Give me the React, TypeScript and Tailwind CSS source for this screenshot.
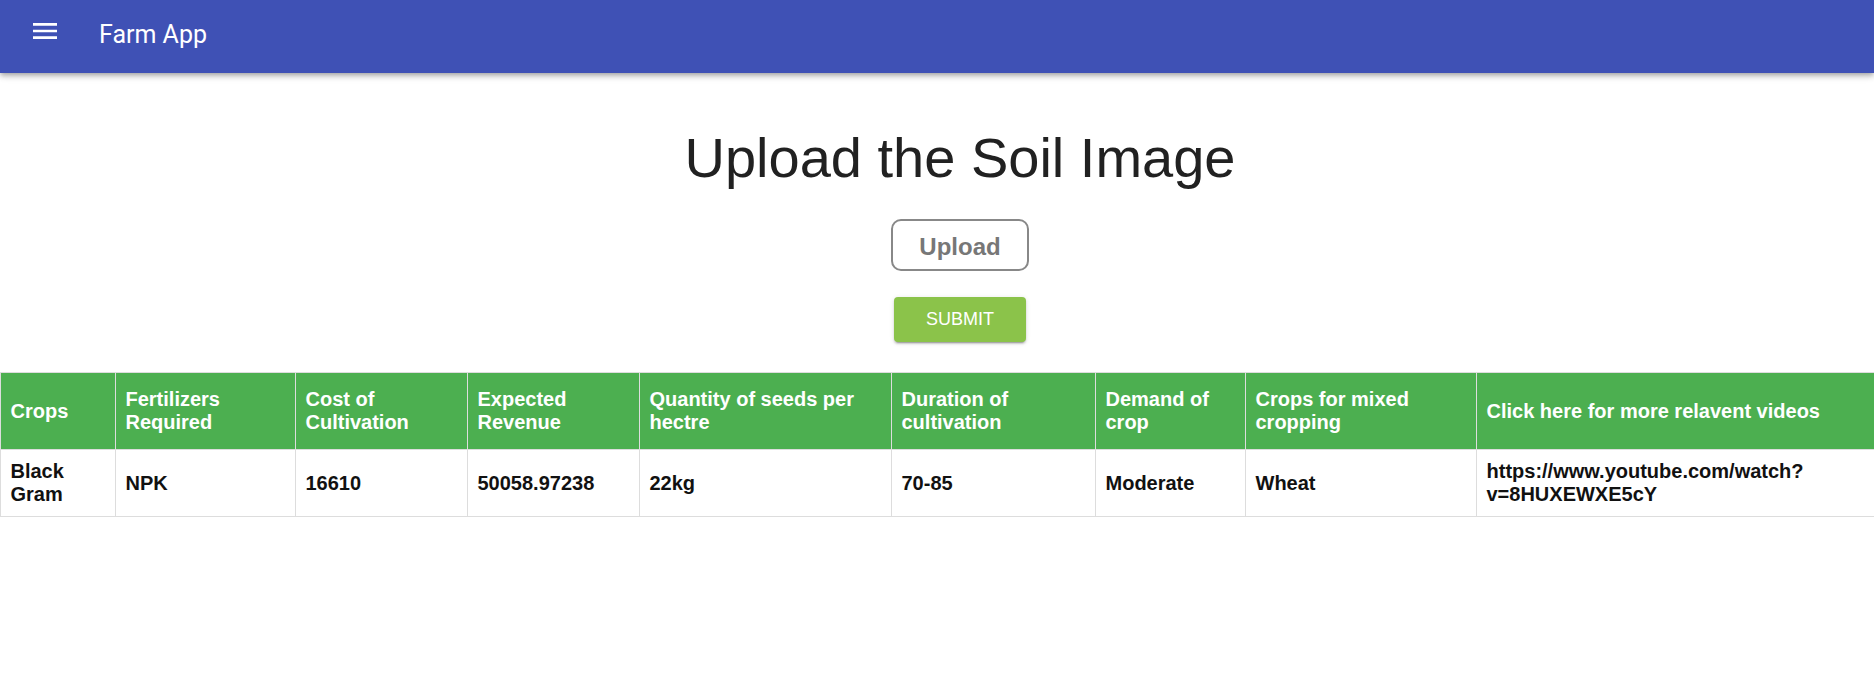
import React from "react";

const headers = [
  "Crops",
  "Fertilizers Required",
  "Cost of Cultivation",
  "Expected Revenue",
  "Quantity of seeds per hectre",
  "Duration of cultivation",
  "Demand of crop",
  "Crops for mixed cropping",
  "Click here for more relavent videos",
];

const row = [
  "Black Gram",
  "NPK",
  "16610",
  "50058.97238",
  "22kg",
  "70-85",
  "Moderate",
  "Wheat",
  "https://www.youtube.com/watch?v=8HUXEWXE5cY",
];

const widths = [115, 180, 172, 172, 252, 204, 150, 231, 444];

export default function App() {
  return (
    <div
      className="w-full min-h-screen overflow-hidden bg-white"
      style={{ fontFamily: '"Liberation Sans", Arial, sans-serif' }}
    >
      <header className="relative z-10 flex h-[73px] w-full items-center bg-[#3f51b5] text-white shadow-[0_2px_4px_-1px_rgba(0,0,0,0.2),0_4px_5px_0_rgba(0,0,0,0.14),0_1px_10px_0_rgba(0,0,0,0.12)]">
        <svg
          viewBox="0 0 24 24"
          className="ml-[29px] mb-[11px] h-[32px] w-[32px] fill-white"
        >
          <path d="M3 18h18v-2H3v2zm0-5h18v-2H3v2zm0-7v2h18V6H3z" />
        </svg>
        <span
          className="ml-[38px] mb-[4px] text-[25px] font-normal leading-[36px]"
          style={{ fontFamily: 'Roboto, "Liberation Sans", sans-serif' }}
        >
          Farm App
        </span>
      </header>

      <main className="flex w-[1920px] flex-col items-center">
        <h1 className="mt-[53px] text-[56px] font-normal leading-[64px] text-[#212121]">
          Upload the Soil Image
        </h1>

        <button className="mt-[29px] flex h-[52px] w-[138px] items-center justify-center rounded-[10px] border-2 border-[#888888] bg-white pt-[3px] text-[24px] font-bold text-[#777777]">
          Upload
        </button>

        <button className="mt-[26px] flex h-[45px] w-[132px] items-center justify-center rounded-[4px] bg-[#8bc34a] text-[18px] font-normal text-white shadow-[0_3px_1px_-2px_rgba(0,0,0,0.2),0_2px_2px_0_rgba(0,0,0,0.14),0_1px_5px_0_rgba(0,0,0,0.12)]">
          SUBMIT
        </button>

        <table className="mt-[30px] w-[1920px] table-fixed border-collapse text-left text-[20px] font-bold leading-[23px]">
          <colgroup>
            {widths.map((w, i) => (
              <col key={i} style={{ width: w }} />
            ))}
          </colgroup>
          <thead>
            <tr>
              {headers.map((h, i) => (
                <th
                  key={i}
                  className="border border-[#dddddd] bg-[#4caf50] px-[10px] py-[15px] align-middle font-bold text-white"
                >
                  {h}
                </th>
              ))}
            </tr>
          </thead>
          <tbody>
            <tr>
              {row.map((c, i) => (
                <td
                  key={i}
                  className="border border-[#dddddd] px-[10px] py-[10px] align-middle text-[#111111]"
                >
                  {c}
                </td>
              ))}
            </tr>
          </tbody>
        </table>
      </main>
    </div>
  );
}
